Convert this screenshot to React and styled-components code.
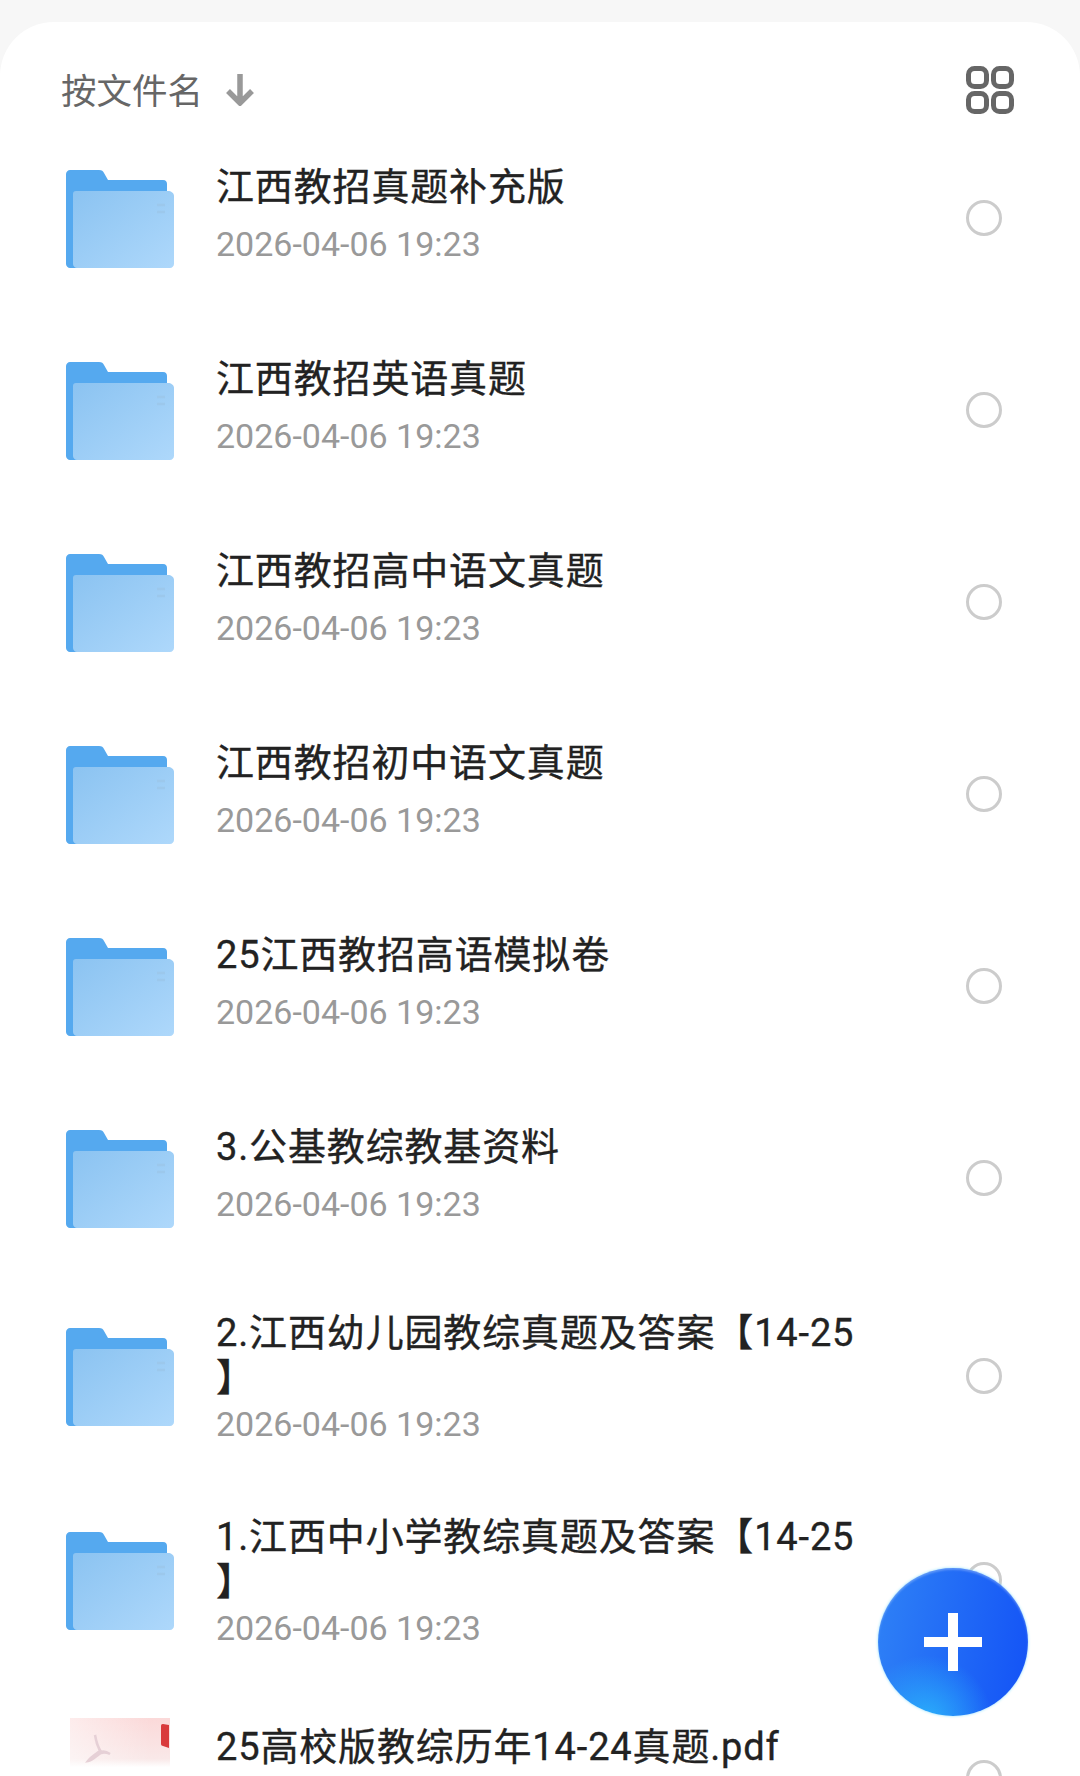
import React from 'react';
import styled, { createGlobalStyle } from 'styled-components';

const FONT = 'Roboto, "Noto Sans CJK SC", sans-serif';

const files = [
    { name: '江西教招真题补充版' },
    { name: '江西教招英语真题' },
    { name: '江西教招高中语文真题' },
    { name: '江西教招初中语文真题' },
    { name: '25江西教招高语模拟卷' },
    { name: '3.公基教综教基资料' },
    { name: '2.江西幼儿园教综真题及答案【14-25\n】', wrapped: true },
    { name: '1.江西中小学教综真题及答案【14-25\n】', wrapped: true },
    { name: '25高校版教综历年14-24真题.pdf', pdf: true },
];

const FolderIcon = () => (
    <FolderSvg width="108" height="98" viewBox="0 0 108 98">
        <defs>
            <linearGradient id="folderFront" x1="0" y1="0" x2="1" y2="1">
                <stop offset="0" stopColor="#8bc3f1" />
                <stop offset="1" stopColor="#aed8fb" />
            </linearGradient>
        </defs>
        <path d="M4 0h29c3 0 4 1 5 3l4 7h55c3 0 4 2 4 4v80c0 2-2 4-4 4H4c-2 0-4-2-4-4V4c0-2 2-4 4-4z" fill="#55a9ef" />
        <path d="M10 21h92c3 0 6 2 6 5v68c0 2-2 4-4 4H11c-2 0-4-2-4-4V24c0-2 1-3 3-3z" fill="url(#folderFront)" />
        <path d="M91 35h8M91 42h8" stroke="#9cc8ec" strokeWidth="2.5" />
    </FolderSvg>
);

const PdfIcon = () => (
    <PdfSvg width="108" height="120" viewBox="0 0 108 120">
        <defs>
            <linearGradient id="pdfFade" x1="0" y1="0" x2="0" y2="1">
                <stop offset="0" stopColor="#fbd9d9" />
                <stop offset="0.34" stopColor="#f9e8e8" />
                <stop offset="0.41" stopColor="#ffffff" />
            </linearGradient>
            <linearGradient id="pdfSide" x1="0" y1="0" x2="1" y2="0">
                <stop offset="0" stopColor="#ffffff" stopOpacity="0.5" />
                <stop offset="0.8" stopColor="#ffffff" stopOpacity="0" />
            </linearGradient>
        </defs>
        <rect x="4" y="0" width="100" height="120" fill="url(#pdfFade)" />
        <rect x="4" y="0" width="100" height="50" fill="url(#pdfSide)" />
        <path d="M103 7l-6-1c-2 0-2 1-2 3v17c0 1 1 2 2 2l6 2z" fill="#d93a3c" />
        <path d="M29 17c1 7 3 12 5 16-4 3-9 6-12 10 5-1 9-6 13-8 3-1 7 0 9 1-3-2-6-3-9-2-3-5-5-11-6-17z" fill="none" stroke="#e6d0d6" strokeWidth="2.5" />
    </PdfSvg>
);

const App = () => {
    return (
        <>
            <GlobalStyle />
            <Page>
                <Sheet>
                    <Header>
                        <SortLabel>
                            按文件名
                            <SortArrow width="30" height="32" viewBox="0 0 30 32">
                                <path d="M15 0v28M3 17l12 12 12-12" fill="none" stroke="#999" strokeWidth="5.5" />
                            </SortArrow>
                        </SortLabel>
                        <svg width="48" height="48" viewBox="0 0 48 48">
                            <g fill="none" stroke="#666" strokeWidth="5">
                                <rect x="2.5" y="2.5" width="18" height="18" rx="6" />
                                <rect x="27.5" y="2.5" width="18" height="18" rx="6" />
                                <rect x="2.5" y="27.5" width="18" height="18" rx="6" />
                                <rect x="27.5" y="27.5" width="18" height="18" rx="6" />
                            </g>
                        </svg>
                    </Header>
                    {files.map((file) => (
                        <Row key={file.name} $wrapped={file.wrapped}>
                            {file.pdf ? <PdfIcon /> : <FolderIcon />}
                            <RowText $wrapped={file.wrapped}>
                                <Title>{file.name}</Title>
                                <Time $wrapped={file.wrapped}>2026-04-06 19:23</Time>
                            </RowText>
                            <Radio />
                        </Row>
                    ))}
                </Sheet>
                <Fab>
                    <svg width="58" height="58" viewBox="0 0 58 58">
                        <path d="M29 0v58M0 29h58" stroke="#fff" strokeWidth="10" />
                    </svg>
                </Fab>
            </Page>
        </>
    );
};

const GlobalStyle = createGlobalStyle`
html, body {
    margin: 0;
    padding: 0;
    background: #fff;
}
`;

const Page = styled.div`
position: relative;
width: 1080px;
height: 1776px;
overflow: hidden;
padding-top: 22px;
box-sizing: border-box;
background: #f7f7f7;
font-family: ${FONT};
`;

const Sheet = styled.div`
background: #fff;
border-radius: 54px 54px 0 0;
padding: 0 78px 0 66px;
`;

const Header = styled.div`
display: flex;
align-items: center;
justify-content: space-between;
height: 100px;
padding-top: 36px;
margin: 0 -12px 0 -5px;
box-sizing: border-box;
`;

const SortLabel = styled.div`
display: flex;
align-items: center;
gap: 22px;
padding-bottom: 4px;
font-size: 35.5px;
color: #666;
`;

const SortArrow = styled.svg`
margin-top: 4px;
`;

const Row = styled.div`
display: grid;
grid-template-columns: 108px 1fr 36px;
column-gap: 42px;
align-items: center;
height: ${(p) => (p.$wrapped ? '204px' : '192px')};
`;

const FolderSvg = styled.svg`
display: block;
margin-top: 2px;
`;

const PdfSvg = styled.svg`
display: block;
`;

const RowText = styled.div`
padding-top: ${(p) => (p.$wrapped ? '3px' : '0')};
padding-bottom: ${(p) => (p.$wrapped ? '0' : '8px')};
`;

const Title = styled.div`
font-size: 38px;
letter-spacing: 0.85px;
line-height: 45px;
color: #222;
white-space: pre-line;
-webkit-text-stroke: 0.35px #222;
`;

const Time = styled.div`
font-size: 34px;
line-height: 40px;
color: #999;
margin-top: ${(p) => (p.$wrapped ? '3px' : '14px')};
`;

const Radio = styled.span`
width: 36px;
height: 36px;
box-sizing: border-box;
border: 3px solid #ccc;
border-radius: 50%;
`;

const Fab = styled.div`
position: absolute;
left: 878px;
top: 1568px;
width: 150px;
height: 148px;
display: flex;
align-items: center;
justify-content: center;
border-radius: 50%;
background:
    radial-gradient(circle at 32% 104%, #2ab0fb 0%, rgba(42, 176, 251, 0) 36%),
    linear-gradient(100deg, #2f82f6 0%, #1352f6 100%);
box-shadow: 0 0 3px #8adfff, inset 0 2px 2px rgba(255, 255, 255, 0.25);
`;

export default App;
